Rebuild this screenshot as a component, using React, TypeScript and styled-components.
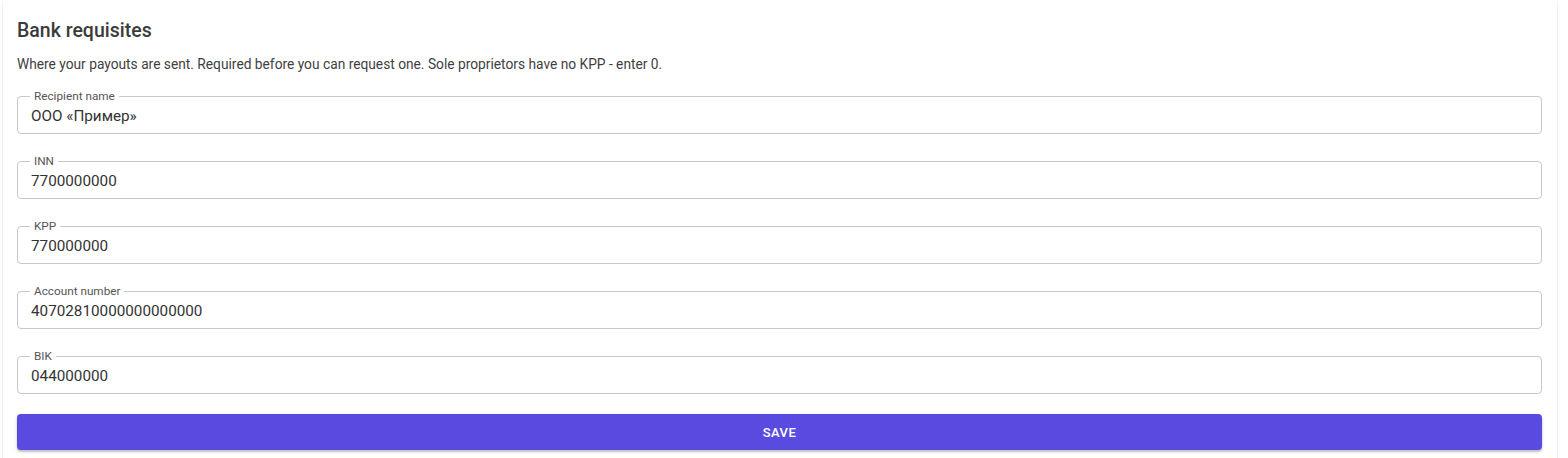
import React from 'react';
import styled, { createGlobalStyle } from 'styled-components';

const GlobalStyle = createGlobalStyle`
  body {
    margin: 0;
    background: #ffffff;
    font-family: Roboto, 'Liberation Sans', Arial, sans-serif;
  }
`;

const fields = [
  { label: 'Recipient name', value: 'ООО «Пример»' },
  { label: 'INN', value: '7700000000' },
  { label: 'KPP', value: '770000000' },
  { label: 'Account number', value: '40702810000000000000' },
  { label: 'BIK', value: '044000000' },
];

export default function App() {
  return (
    <>
      <GlobalStyle />
      <Page>
        <Card>
          <Title>Bank requisites</Title>
          <Description>
            Where your payouts are sent. Required before you can request one. Sole proprietors have no KPP - enter 0.
          </Description>
          <Form onSubmit={(e) => e.preventDefault()}>
            {fields.map((f) => (
              <Field key={f.label}>
                <Legend>{f.label}</Legend>
                <Input defaultValue={f.value} />
              </Field>
            ))}
            <SaveButton type="submit">Save</SaveButton>
          </Form>
        </Card>
      </Page>
    </>
  );
}

const Page = styled.div`
  padding: 0 11px 0 3px;
`;

const Card = styled.div`
  background: #fff;
  border-radius: 0 0 4px 4px;
  box-shadow: 0 1px 3px rgba(0, 0, 0, 0.12), 0 0 1px rgba(0, 0, 0, 0.1);
  padding: 19px 15px 16px 14px;
`;

const Title = styled.h2`
  margin: 0;
  font-size: 19.5px;
  font-weight: 500;
  line-height: 24px;
  color: #3b3b3b;
`;

const Description = styled.p`
  margin: 12px 0 0;
  font-size: 13.75px;
  line-height: 18px;
  color: #3f3f3f;
`;

const Form = styled.form`
  display: flex;
  flex-direction: column;
  gap: 21px;
  margin-top: 17px;
`;

const Field = styled.fieldset`
  margin: 0;
  padding: 0 12px 3px;
  border: 1px solid #c8c8c8;
  border-radius: 4px;
  min-width: 0;
`;

const Legend = styled.legend`
  padding: 0 4px;
  font-size: 11.75px;
  line-height: 12px;
  color: #555;
`;

const Input = styled.input`
  display: block;
  width: 100%;
  box-sizing: border-box;
  height: 28px;
  margin: 0 0 0 1px;
  padding: 0;
  border: none;
  outline: none;
  background: transparent;
  font-family: Roboto, 'Liberation Sans', Arial, sans-serif;
  font-size: 15.25px;
  color: #333;
`;

const SaveButton = styled.button`
  margin-top: -1px;
  height: 36px;
  border: none;
  border-radius: 4px;
  background: #5a4be0;
  color: #fff;
  font-family: Roboto, 'Liberation Sans', Arial, sans-serif;
  font-size: 13px;
  font-weight: 500;
  letter-spacing: 0.4px;
  text-transform: uppercase;
  box-shadow: 0 2px 2px rgba(0, 0, 0, 0.2), 0 1px 4px rgba(0, 0, 0, 0.1);
  cursor: pointer;
`;
